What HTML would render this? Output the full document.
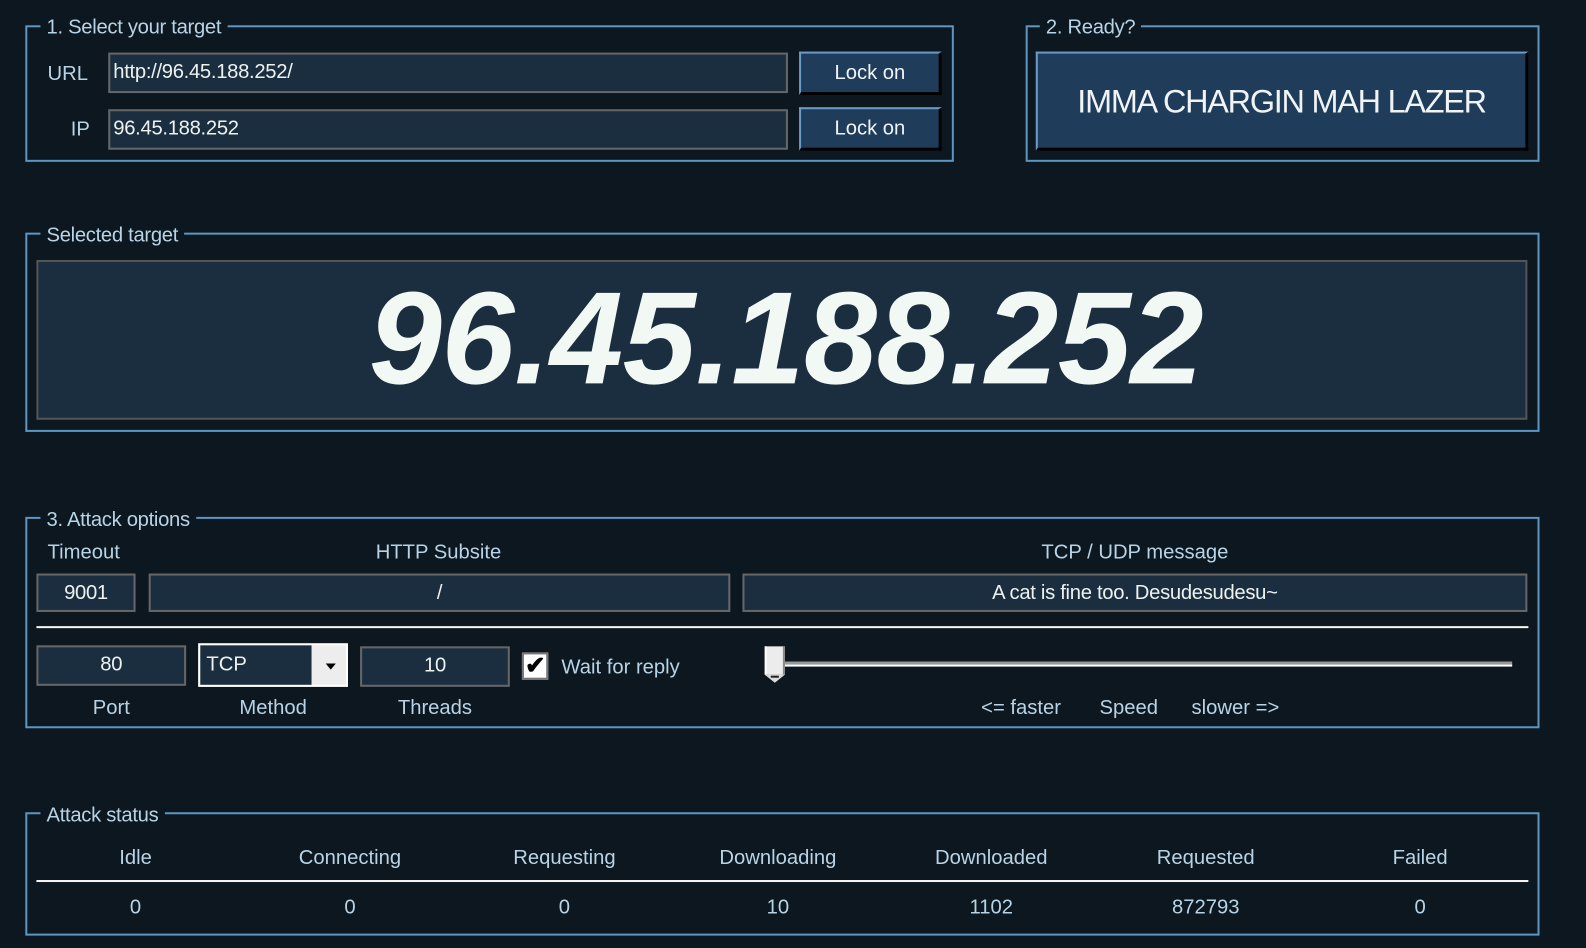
<!DOCTYPE html>
<html><head><meta charset="utf-8"><style>
*{margin:0;padding:0;box-sizing:border-box}
html,body{width:1586px;height:948px;background:#0c1720;overflow:hidden}
#w{position:absolute;left:0;top:0;width:1568px;height:937px;transform:scale(1.0115);transform-origin:0 0;font-family:"Liberation Sans",sans-serif;color:#b9d3e6;font-size:20px}
.a{position:absolute;white-space:nowrap}
.fr{position:absolute;border:2px solid #5b95c2}
.lg{position:absolute;background:#0c1720;padding:0 6px;line-height:22px;font-size:20px;color:#b9d3e6;letter-spacing:-0.3px}
.in{position:absolute;background:#1b2e40;border:2px solid #666;color:#eef2ef;line-height:34px;font-size:20px;letter-spacing:-0.3px}
.btn{position:absolute;background:#1f3c5b;border-top:2px solid #6a9bc8;border-left:2px solid #6a9bc8;border-right:3px solid #000;border-bottom:3px solid #000;color:#f0f4f6;text-align:center}
.c{text-align:center}
</style></head><body><div id="w">

<div class="fr" style="left:25px;top:25px;width:918px;height:135px"></div>
<div class="lg" style="left:40px;top:16px">1. Select your target</div>
<div class="a" style="left:47px;top:62px">URL</div>
<div class="a" style="left:70px;top:117px">IP</div>
<div class="in" style="left:107px;top:52px;width:672px;height:40px;padding-left:3px">http://96.45.188.252/</div>
<div class="in" style="left:107px;top:108px;width:672px;height:40px;padding-left:3px">96.45.188.252</div>
<div class="btn" style="left:790px;top:51px;width:141px;height:43px;line-height:38px">Lock on</div>
<div class="btn" style="left:790px;top:106px;width:141px;height:43px;line-height:38px">Lock on</div>

<div class="fr" style="left:1014px;top:25px;width:508px;height:135px"></div>
<div class="lg" style="left:1028px;top:16px">2. Ready?</div>
<div class="btn" style="left:1024px;top:51px;width:487px;height:98px;line-height:94px;font-size:32px;letter-spacing:-1.2px">IMMA CHARGIN MAH LAZER</div>

<div class="fr" style="left:25px;top:230px;width:1497px;height:197px"></div>
<div class="lg" style="left:40px;top:222px">Selected target</div>
<div class="a" style="left:36px;top:257px;width:1474px;height:158px;background:#1b2e40;border:2px solid #555"></div>
<div class="a c" style="left:40px;top:256px;width:1474px;line-height:156px;font-size:130px;font-weight:bold;font-style:italic;color:#f2f8f4;letter-spacing:-0.5px">96.45.188.252</div>

<div class="fr" style="left:25px;top:511px;width:1497px;height:209px"></div>
<div class="lg" style="left:40px;top:503px">3. Attack options</div>
<div class="a" style="left:47px;top:535px">Timeout</div>
<div class="a c" style="left:146px;top:535px;width:575px">HTTP Subsite</div>
<div class="a c" style="left:734px;top:535px;width:776px">TCP / UDP message</div>
<div class="in c" style="left:36px;top:567px;width:98px;height:38px">9001</div>
<div class="in c" style="left:147px;top:567px;width:575px;height:38px">/</div>
<div class="in c" style="left:734px;top:567px;width:776px;height:38px">A cat is fine too. Desudesudesu~</div>
<div class="a" style="left:36px;top:619px;width:1475px;height:2px;background:#f4f4f4"></div>
<div class="in c" style="left:36px;top:638px;width:148px;height:40px">80</div>
<div class="a" style="left:196px;top:636px;width:148px;height:43px;border:2px solid #fff;background:#ededed"></div>
<div class="a" style="left:198px;top:638px;width:110px;height:39px;background:#1b2e40;color:#eef2ef;line-height:38px;padding-left:6px">TCP</div>
<div class="a" style="left:322px;top:656px;width:0;height:0;border-left:5px solid transparent;border-right:5px solid transparent;border-top:6px solid #000"></div>
<div class="in c" style="left:356px;top:639px;width:148px;height:40px">10</div>
<div class="a" style="left:516px;top:645px;width:26px;height:27px;background:#fff;border:2px solid #777"></div>
<div class="a" style="left:519px;top:644px;font-size:24px;color:#000;font-weight:bold">✔</div>
<div class="a" style="left:555px;top:649px">Wait for reply</div>
<div class="a c" style="left:36px;top:689px;width:148px">Port</div>
<div class="a c" style="left:196px;top:689px;width:148px">Method</div>
<div class="a c" style="left:356px;top:689px;width:148px">Threads</div>
<div class="a" style="left:768px;top:654px;width:727px;height:3px;background:#999"></div>
<div class="a" style="left:768px;top:657px;width:727px;height:2px;background:#fff"></div>
<div class="a" style="left:756px;top:639px;width:20px;height:28px;background:#ececec;border-left:2px solid #fff;border-right:2px solid #888"></div>
<div class="a" style="left:756px;top:667px;width:0;height:0;border-left:10px solid transparent;border-right:10px solid transparent;border-top:8px solid #ddd"></div>
<div class="a" style="left:762px;top:668px;width:8px;height:2px;background:#222"></div>
<div class="a" style="left:970px;top:689px">&lt;= faster</div>
<div class="a" style="left:1087px;top:689px">Speed</div>
<div class="a" style="left:1178px;top:689px">slower =&gt;</div>

<div class="fr" style="left:25px;top:803px;width:1497px;height:122px"></div>
<div class="lg" style="left:40px;top:795px">Attack status</div>
<div class="a" style="left:36px;top:870px;width:1475px;height:2px;background:#f4f4f4"></div>
<div class="a c" style="left:34px;top:837px;width:200px">Idle</div>
<div class="a c" style="left:246px;top:837px;width:200px">Connecting</div>
<div class="a c" style="left:458px;top:837px;width:200px">Requesting</div>
<div class="a c" style="left:669px;top:837px;width:200px">Downloading</div>
<div class="a c" style="left:880px;top:837px;width:200px">Downloaded</div>
<div class="a c" style="left:1092px;top:837px;width:200px">Requested</div>
<div class="a c" style="left:1304px;top:837px;width:200px">Failed</div>
<div class="a c" style="left:34px;top:886px;width:200px">0</div>
<div class="a c" style="left:246px;top:886px;width:200px">0</div>
<div class="a c" style="left:458px;top:886px;width:200px">0</div>
<div class="a c" style="left:669px;top:886px;width:200px">10</div>
<div class="a c" style="left:880px;top:886px;width:200px">1102</div>
<div class="a c" style="left:1092px;top:886px;width:200px">872793</div>
<div class="a c" style="left:1304px;top:886px;width:200px">0</div>
</div></body></html>
